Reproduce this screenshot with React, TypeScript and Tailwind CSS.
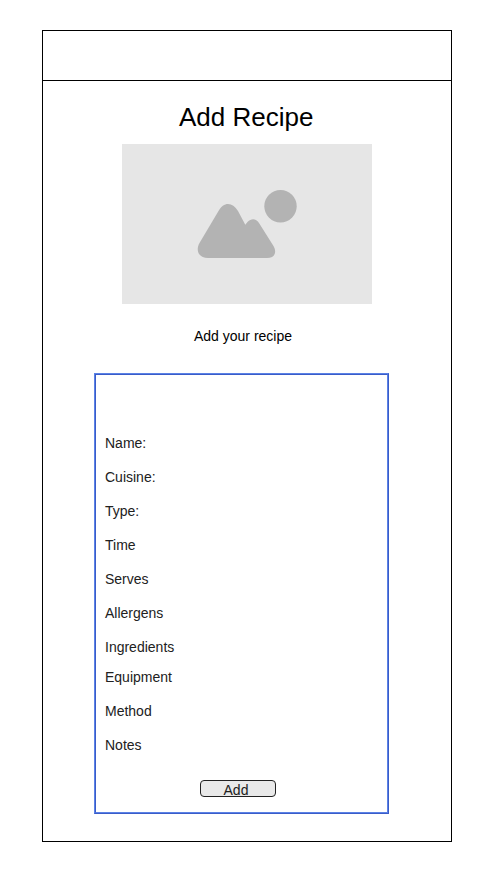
const fields = [
  { label: "Name:", pitch: "h-[34px]" },
  { label: "Cuisine:", pitch: "h-[34px]" },
  { label: "Type:", pitch: "h-[34px]" },
  { label: "Time", pitch: "h-[34px]" },
  { label: "Serves", pitch: "h-[34px]" },
  { label: "Allergens", pitch: "h-[34px]" },
  { label: "Ingredients", pitch: "h-[30px]" },
  { label: "Equipment", pitch: "h-[34px]" },
  { label: "Method", pitch: "h-[34px]" },
  { label: "Notes", pitch: "h-[43px]" },
];

export default function App() {
  return (
    <div className="h-[888px] w-[492px] bg-white pt-[30px] pl-[42px] font-['Liberation_Sans',Arial,sans-serif] text-[14px] leading-4 text-black">
      <main className="flex h-[812px] w-[410px] flex-col border border-black">
        <header className="h-[50px] shrink-0 border-b border-black" />
        <h1 className="mt-[21px] ml-[136px] text-[26px] leading-[30px] whitespace-nowrap">Add Recipe</h1>
        <div className="mt-[12px] ml-[79px] h-[160px] w-[250px] shrink-0 bg-[#e6e6e6]">
          <svg className="h-[160px] w-[250px]" viewBox="0 0 250 160" fill="#b3b3b3">
            <circle cx="158.5" cy="62.2" r="16.2" />
            <path d="M77.500 99 L96.500 67 C101.500 57.500 110.500 57.500 116 67 L123.300 80.700 L125.500 78 C129.500 74 134 74.500 137 79 L151.500 102 C155 108 153 114 145 114 H86 C77.500 114 73 107 77.500 99Z" />
          </svg>
        </div>
        <p className="mt-[24px] ml-[151px]">Add your recipe</p>
        <div className="mt-[29px] ml-[51px] h-[441px] w-[295px] shrink-0 border border-t-[#5b82e6] border-r-[#3a5cc8] border-b-[#3a5cc8] border-l-[#5b82e6]">
          <form className="flex h-full flex-col border border-t-[#3a5cc8] border-r-[#5b82e6] border-b-[#5b82e6] border-l-[#3a5cc8] pt-[60px] pl-[9px] text-[#212121]">
            {fields.map((f) => (
              <label key={f.label} className={`${f.pitch} block shrink-0`}>{f.label}</label>
            ))}
            <button type="button" className="ml-[95px] h-[17px] w-[76px] shrink-0 rounded-[4px] border border-[#212121] bg-[#e9e9e9] pr-[4px] text-center leading-[19px]">Add</button>
          </form>
        </div>
      </main>
    </div>
  );
}
